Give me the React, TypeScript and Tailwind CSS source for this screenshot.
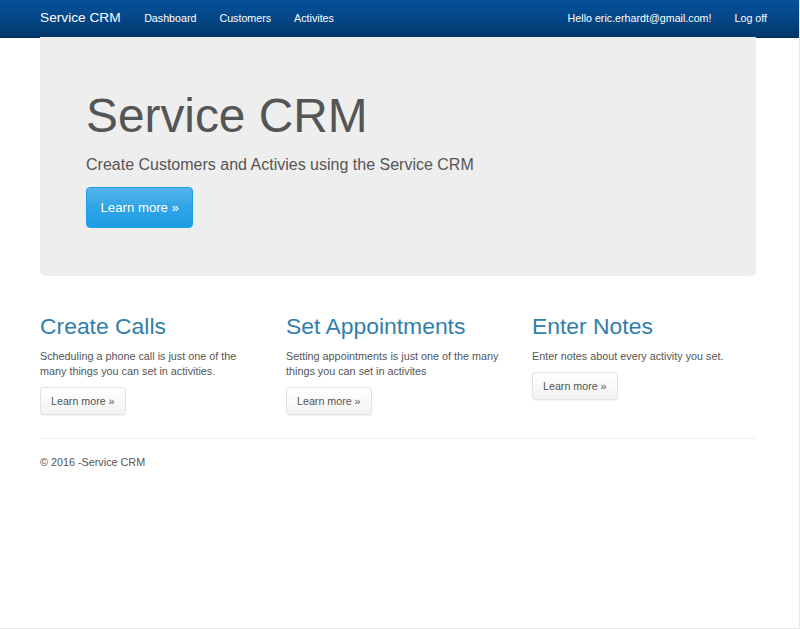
import React from 'react';

const cards = [
  {
    title: 'Create Calls',
    text: 'Scheduling a phone call is just one of the many things you can set in activities.',
  },
  {
    title: 'Set Appointments',
    text: 'Setting appointments is just one of the many things you can set in activites',
  },
  {
    title: 'Enter Notes',
    text: 'Enter notes about every activity you set.',
  },
];

export default function App() {
  return (
    <div className="min-h-[629px] bg-white font-['Liberation_Sans',Arial,sans-serif] text-[#555555] border-r border-b border-[#e8e8e8]">
      {/* Navbar */}
      <nav className="h-[38px] bg-gradient-to-b from-[#04519b] via-[#044687] to-[#033769] border-b border-[#022f5a]">
        <div className="ml-[40px] w-[727px] h-full flex items-center justify-between text-white">
          <div className="flex items-center">
            <a className="text-[13.7px] pr-[12px]">Service CRM</a>
            <a className="text-[10.7px] px-[11.5px]">Dashboard</a>
            <a className="text-[10.7px] px-[11.5px]">Customers</a>
            <a className="text-[10.7px] px-[11.5px]">Activites</a>
          </div>
          <div className="flex items-center text-[10.7px]">
            <a className="px-[11.5px]">Hello eric.erhardt@gmail.com!</a>
            <a className="pl-[11.5px]">Log off</a>
          </div>
        </div>
      </nav>

      <div className="ml-[40px] w-[716px]">
        {/* Jumbotron */}
        <div className="bg-[#eeeeee] rounded-b-[5px] pl-[46px] pt-[53px] pb-[48px] mt-[-1px]">
          <h1 className="text-[47.8px] leading-[52px] text-[#555555]">Service CRM</h1>
          <p className="text-[16px] leading-[23px] mt-[11px]">Create Customers and Activies using the Service CRM</p>
          <button className="mt-[11px] h-[41px] px-[13.5px] rounded-[4px] border border-[#1f9ee8] bg-gradient-to-b from-[#54b4eb] via-[#2fa4e7] to-[#1d9ce5] text-white text-[13.2px]">
            Learn more »
          </button>
        </div>

        {/* Columns */}
        <div className="grid grid-cols-[246px_246px_246px] pt-[38px]">
          {cards.map((c) => (
            <div key={c.title} className="pr-[30px]">
              <h2 className="text-[22.9px] leading-[25px] text-[#317eac]">{c.title}</h2>
              <p className="text-[10.8px] leading-[15px] mt-[10px]">{c.text}</p>
              <button className="mt-[8px] h-[28px] px-[10px] rounded-[3px] border border-[#e2e2e2] bg-gradient-to-b from-white to-[#f3f3f3] text-[#555555] text-[10.7px] shadow-[0_1px_1px_rgba(0,0,0,0.05)]">
                Learn more »
              </button>
            </div>
          ))}
        </div>

        {/* Footer */}
        <hr className="mt-[23px] border-t border-[#eeeeee]" />
        <footer className="pt-[16px]">
          <p className="text-[10.8px] leading-[15px]">© 2016 -Service CRM</p>
        </footer>
      </div>
    </div>
  );
}
